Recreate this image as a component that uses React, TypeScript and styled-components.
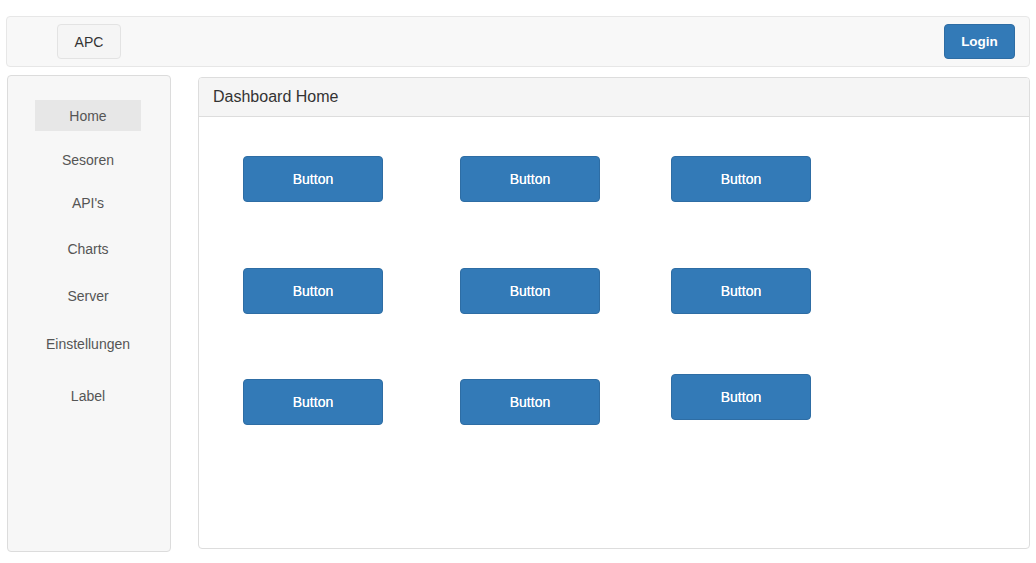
import React from "react";
import styled, { createGlobalStyle } from "styled-components";

const GlobalStyle = createGlobalStyle`
  html, body {
    margin: 0;
    padding: 0;
    background: #fff;
    font-family: "Liberation Sans", Arial, Helvetica, sans-serif;
    font-size: 14px;
    color: #333;
  }
  * {
    box-sizing: border-box;
  }
`;

const Page = styled.div`
  width: 1036px;
  height: 563px;
  padding: 16px 6px 0 6px;
  display: flex;
  flex-direction: column;
`;

const Navbar = styled.nav`
  height: 51px;
  display: flex;
  align-items: center;
  justify-content: space-between;
  padding: 0 14px 0 50px;
  background: #f8f8f8;
  border: 1px solid #e7e7e7;
  border-radius: 4px;
`;

const BrandButton = styled.button`
  width: 64px;
  height: 35px;
  background: #f5f5f5;
  border: 1px solid #e3e3e3;
  border-radius: 4px;
  color: #333;
  font-family: inherit;
  font-size: 14px;
`;

const LoginButton = styled.button`
  width: 71px;
  height: 35px;
  background: #337ab7;
  border: 1px solid #2e6da4;
  border-radius: 4px;
  color: #fff;
  font-family: inherit;
  font-size: 13.5px;
  font-weight: bold;
`;

const Main = styled.div`
  display: flex;
  gap: 27px;
  margin-top: 8px;
  padding-left: 1px;
`;

const Sidebar = styled.aside`
  width: 164px;
  height: 477px;
  background: #f7f7f7;
  border: 1px solid #dcdcdc;
  border-radius: 4px;
  padding: 24px 2px 0 0;
  display: flex;
  flex-direction: column;
  align-items: center;
`;

const NavItem = styled.div<{ $active?: boolean; $h: number }>`
  width: 106px;
  height: ${(p) => p.$h}px;
  display: flex;
  align-items: center;
  justify-content: center;
  background: ${(p) => (p.$active ? "#e7e7e7" : "transparent")};
  color: #555;
  font-size: 14px;
  flex-shrink: 0;
`;

const Panel = styled.section`
  flex: 1;
  height: 472px;
  margin-top: 2px;
  background: #fff;
  border: 1px solid #dddddd;
  border-radius: 4px;
  display: flex;
  flex-direction: column;
  overflow: hidden;
`;

const PanelHeading = styled.div`
  height: 39px;
  padding: 0 14px;
  display: flex;
  align-items: center;
  background: #f5f5f5;
  border-bottom: 1px solid #dddddd;
  color: #333;
  font-size: 16px;
`;

const PanelBody = styled.div`
  padding: 39px 0 0 44px;
  display: grid;
  grid-template-columns: 217px 211px 140px;
  grid-auto-rows: 46px;
  row-gap: 65.5px;
`;

const ActionButton = styled.button<{ $raise?: number }>`
  width: 140px;
  height: 46px;
  margin-top: ${(p) => -(p.$raise ?? 0)}px;
  background: #337ab7;
  border: 1px solid #2e6da4;
  border-radius: 4px;
  color: #fff;
  font-family: inherit;
  font-size: 14px;
  text-shadow: 0 0 0.4px #fff;
`;

const navItems = [
  { label: "Home", h: 31, active: true },
  { label: "Sesoren", h: 57 },
  { label: "API's", h: 30 },
  { label: "Charts", h: 62 },
  { label: "Server", h: 32 },
  { label: "Einstellungen", h: 64 },
  { label: "Label", h: 40 },
];

const raised = [0, 0, 0, 0, 0, 0, 0, 0, 5];

export default function App() {
  return (
    <>
      <GlobalStyle />
      <Page>
        <Navbar>
          <BrandButton>APC</BrandButton>
          <LoginButton>Login</LoginButton>
        </Navbar>
        <Main>
          <Sidebar>
            {navItems.map((item) => (
              <NavItem key={item.label} $active={item.active} $h={item.h}>
                {item.label}
              </NavItem>
            ))}
          </Sidebar>
          <Panel>
            <PanelHeading>Dashboard Home</PanelHeading>
            <PanelBody>
              {raised.map((r, i) => (
                <ActionButton key={i} $raise={r}>
                  Button
                </ActionButton>
              ))}
            </PanelBody>
          </Panel>
        </Main>
      </Page>
    </>
  );
}
